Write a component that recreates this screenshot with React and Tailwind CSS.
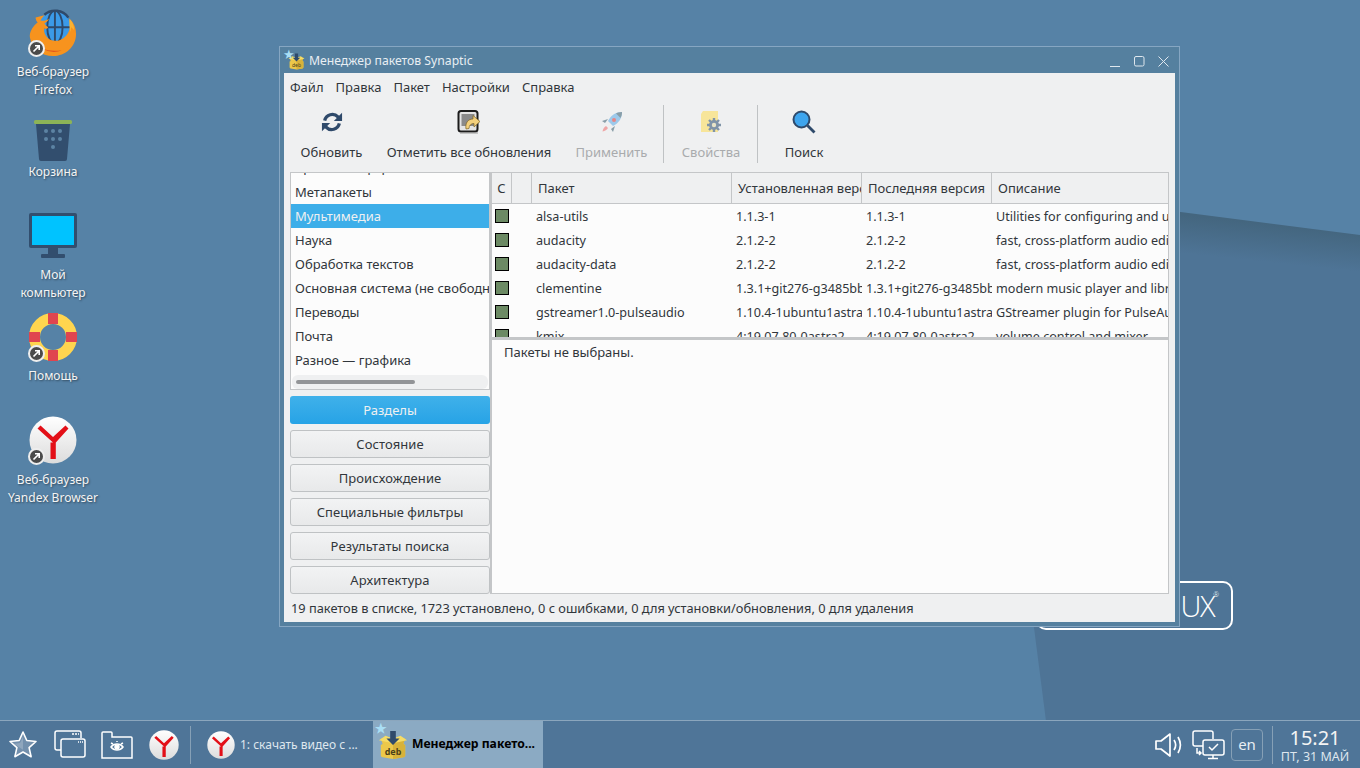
import React from 'react';

const font = { fontFamily: '"Noto Sans", sans-serif' };

const Shortcut = () => (
  <div className="absolute left-[-1px] bottom-[-1px] w-[17px] h-[17px] rounded-full bg-[#4a4a4a] border-2 border-[#eeeeee] flex items-center justify-center">
    <svg width="9" height="9" viewBox="0 0 9 9" fill="none" stroke="#fff" strokeWidth="1.6">
      <path d="M1.5 7.5L7 2M3 1.8h4.2V6" />
    </svg>
  </div>
);

const YandexIcon = ({ size = 48 }) => (
  <svg width={size} height={size} viewBox="0 0 48 48">
    <defs>
      <linearGradient id="yg" x1="0" y1="0" x2="0" y2="1">
        <stop offset="0" stopColor="#ffffff" />
        <stop offset="1" stopColor="#dcdcdc" />
      </linearGradient>
    </defs>
    <circle cx="24" cy="24" r="23.5" fill="url(#yg)" />
    <path d="M24 26.5L8.5 12.5l3-3L24 21 36.500 9.500l3 3L26.800 26.500V43h-5.300V26.500z" fill="#e30f17" />
  </svg>
);

const FirefoxIcon = () => (
  <svg width="50" height="50" viewBox="0 0 50 50">
    <path d="M7 10c0 2 1 4 2 5C4 19 0 25 1 31c2 11 12 19 24 19 13 0 24-10 24-23 0-6-2-11-6-15l-2 3c-1-5-4-9-8-12z" fill="#f7931e" />
    <circle cx="27" cy="20" r="16.500" fill="#3b9ae8" />
    <g fill="none" stroke="#2f4a6b" strokeWidth="2">
      <path d="M16 7a17 17 0 0 1 25 3" strokeWidth="2.600" />
      <path d="M27 3v34M10 20h34" />
      <ellipse cx="27" cy="20" rx="8" ry="17" />
    </g>
    <path d="M7 10c2 3 5 4 10 3 1 0 3-1 4-2-1 3-3 4-5 5 1 2 2 3 4 4-1 2-3 2-4 1-1 4 1 9 6 12 7 3 14 0 18-6 2-3 3-6 3-10l3 5c1 12-9 26-23 26C11 48 2 39 2 29 2 22 6 17 10 15c-2-1-3-3-3-5z" fill="#f7931e" />
    <path d="M42 11c3 3 5 7 5 12l-3-3-1 5c-1-4-1-10-1-14z" fill="#f9b233" />
    <path d="M14 42c5 4 14 5 20 2-6 1-14 1-20-2z" fill="#e2571e" />
  </svg>
);

const TrashIcon = () => (
  <svg width="40" height="42" viewBox="0 0 40 42">
    <rect x="1" y="0" width="38" height="4" rx="1.500" fill="#8cb357" />
    <path d="M3 4h34l-3 35a2 2 0 0 1-2 2H8a2 2 0 0 1-2-2z" fill="#324e6e" />
    <g fill="#5d83a3">
      <circle cx="13" cy="11" r="2" /><circle cx="20" cy="11" r="2" /><circle cx="27" cy="11" r="2" />
      <circle cx="13" cy="19" r="2" /><circle cx="20" cy="19" r="2" /><circle cx="27" cy="19" r="2" />
      <circle cx="20" cy="27" r="2" />
    </g>
  </svg>
);

const MonitorIcon = () => (
  <svg width="48" height="48" viewBox="0 0 48 48">
    <rect x="0" y="1" width="48" height="35" rx="2" fill="#324e6e" />
    <rect x="3" y="4" width="42" height="29" fill="#00c3ff" />
    <rect x="19" y="36" width="10" height="7" fill="#324e6e" />
    <rect x="12" y="42" width="24" height="4" rx="1" fill="#324e6e" />
  </svg>
);

const HelpIcon = () => (
  <svg width="48" height="48" viewBox="0 0 48 48">
    <circle cx="24" cy="24" r="18.500" fill="none" stroke="#ffd54f" strokeWidth="11" />
    <g fill="#e0454f">
      <rect x="19" y="0" width="10" height="11" />
      <rect x="19" y="37" width="10" height="11" />
      <rect x="0" y="19" width="11" height="10" />
      <rect x="37" y="19" width="11" height="10" />
    </g>
  </svg>
);

const DebIcon = ({ size = 32 }) => (
  <svg width={size} height={size} viewBox="0 0 32 32">
    <path d="M3 9l13 3 13-3-2 6 2 1v11a2 2 0 0 1-2 2l-11 2-11-2a2 2 0 0 1-2-2V16l2-1z" fill="#ecc84a" />
    <path d="M16 12v19l11-2a2 2 0 0 0 2-2V16l-2-1 2-6z" fill="#d8b23a" />
    <path d="M1 11l7-5 8 3 8-3 7 5-15 3z" fill="#f6dc66" />
    <path d="M13 1h6v8h4l-7 7-7-7h4z" fill="#2f4a6b" />
    <text x="16" y="27" textAnchor="middle" fontSize="9.500" fill="#4a3f1a" fontFamily="Noto Sans">deb</text>
  </svg>
);

const DesktopItem = ({ className, lines, children, shortcut, labelClass = 'mt-[6px]' }) => (
  <div className={`absolute flex flex-col items-center w-[110px] text-[12px] leading-[18px] text-[#f4f4f4] [text-shadow:1px_1px_2px_rgba(0,0,0,0.45)] ${className}`}>
    <div className="relative w-[48px] h-[48px] flex items-center justify-center">
      {children}
      {shortcut && <Shortcut />}
    </div>
    <div className={`text-center whitespace-nowrap ${labelClass}`}>
      {lines.map((l) => <div key={l}>{l}</div>)}
    </div>
  </div>
);

const ToolButton = ({ label, disabled, children, className = '' }) => (
  <div className={`flex flex-col items-center h-[62px] ${disabled ? 'text-[#a9abad]' : 'text-[#31363b]'} ${className}`}>
    <div className="h-[30px] w-[26px] mt-[1px] flex items-center justify-center">{children}</div>
    <div className="mt-[6px] leading-[18px] whitespace-nowrap">{label}</div>
  </div>
);

const ToolSep = () => <div className="w-px h-[58px] bg-[#bfc2c4] mt-[-1px]" />;

const packages = [
  ['alsa-utils', '1.1.3-1', '1.1.3-1', 'Utilities for configuring and using ALSA'],
  ['audacity', '2.1.2-2', '2.1.2-2', 'fast, cross-platform audio editor'],
  ['audacity-data', '2.1.2-2', '2.1.2-2', 'fast, cross-platform audio editor (data)'],
  ['clementine', '1.3.1+git276-g3485bbe', '1.3.1+git276-g3485bbe', 'modern music player and library organizer'],
  ['gstreamer1.0-pulseaudio', '1.10.4-1ubuntu1astra', '1.10.4-1ubuntu1astra', 'GStreamer plugin for PulseAudio'],
  ['kmix', '4:19.07.80-0astra2', '4:19.07.80-0astra2', 'volume control and mixer'],
];

const sections = ['Метапакеты', 'Мультимедиа', 'Наука', 'Обработка текстов', 'Основная система (не свободные)', 'Переводы', 'Почта', 'Разное — графика'];
const filters = ['Состояние', 'Происхождение', 'Специальные фильтры', 'Результаты поиска', 'Архитектура'];

const HeaderCell = ({ w, children, center }) => (
  <div className={`${w} h-full pt-[2px] shrink-0 overflow-hidden whitespace-nowrap border-r border-[#c4c6c8] flex items-center ${center ? 'justify-center' : 'pl-[6px]'}`}>
    {children}
  </div>
);

const Cell = ({ w, children }) => (
  <div className={`${w} pl-[4px] shrink-0 overflow-hidden whitespace-nowrap`}>{children}</div>
);

const SynapticWindow = () => (
  <div className="absolute left-[279px] top-[46px] w-[901px] h-[581px] border border-[#86a6c2] bg-[#55809f] flex flex-col px-[4px] pb-[4px] text-[13px] text-[#31363b]">
    {/* title bar */}
    <div className="h-[26px] pt-[2px] shrink-0 flex items-center relative text-[#e8eef3] text-[12.200px]">
      <span className="absolute left-[-1px] top-[1px] text-[#a9def5] text-[13px] leading-none">★</span>
      <div className="ml-[4px] mr-[4px]"><DebIcon size={17} /></div>
      <span>Менеджер пакетов Synaptic</span>
      <div className="ml-auto flex items-center gap-[13px] mr-[6px]">
        <svg width="11" height="11" viewBox="0 0 11 11" stroke="#dfe7ee" fill="none"><path d="M0 10.500h10" /></svg>
        <svg width="11" height="11" viewBox="0 0 11 11" stroke="#dfe7ee" fill="none"><rect x="0.500" y="0.500" width="9.500" height="9.500" rx="1.500" /></svg>
        <svg width="11" height="11" viewBox="0 0 11 11" stroke="#dfe7ee" fill="none"><path d="M0.500 0.500l10 10M10.500 0.500l-10 10" /></svg>
      </div>
    </div>
    <div className="flex-1 bg-[#eff0f1] flex flex-col min-h-0">
      {/* menu */}
      <div className="h-[28px] shrink-0 flex items-center gap-[12px] pl-[6px] pt-[1px]">
        {['Файл', 'Правка', 'Пакет', 'Настройки', 'Справка'].map((m) => <span key={m}>{m}</span>)}
      </div>
      {/* toolbar */}
      <div className="h-[71px] shrink-0 flex items-start pt-[5px] pl-[16px]">
        <ToolButton label="Обновить" className="w-[63px]">
          <svg width="22" height="22" viewBox="0 0 24 24" fill="none" stroke="#2f4a6b" strokeWidth="3.600">
            <path d="M4 10.500A8.500 8.500 0 0 1 18.500 6.500L21 9" />
            <path d="M20 13.500A8.500 8.500 0 0 1 5.500 17.500L3 15" />
            <path d="M23 2v9h-9z" fill="#2f4a6b" stroke="none" />
            <path d="M1 22v-9h9z" fill="#2f4a6b" stroke="none" />
          </svg>
        </ToolButton>
        <ToolButton label="Отметить все обновления" className="w-[164px] ml-[24px]">
          <svg width="24" height="24" viewBox="0 0 24 24">
            <rect x="1.500" y="1" width="19" height="20.500" rx="2.500" fill="#e4e4e4" stroke="#1c1c1c" strokeWidth="2" />
            <rect x="4.500" y="4" width="13" height="12" fill="#8a8a8a" />
            <path d="M9 19c-1-6 2-10 7-10V5.500l7 6-6 5.500v-3.500c-3 0-5 2-5 5z" fill="#f3d07c" stroke="#7d6220" strokeWidth="0.700" />
            <path d="M3 23h18" stroke="#999" />
          </svg>
        </ToolButton>
        <ToolButton label="Применить" disabled className="w-[73px] ml-[24px]">
          <svg width="24" height="24" viewBox="0 0 24 24" opacity="0.85">
            <path d="M22 2c-6 0-11 3-14 9l5 5c6-3 9-8 9-14z" fill="#8fc3ea" />
            <path d="M22 2c-3 0-5 .8-6 1.500l4.500 4.500C21.300 6.500 22 5 22 2z" fill="#78909c" />
            <circle cx="14" cy="10" r="2" fill="#e57373" />
            <path d="M8 9l-6 2 3 2zM15 16l-2 6-2-3z" fill="#78909c" />
            <path d="M6 16c-2 1-3 3-3.500 5.500C5 21 7 20 8 18z" fill="#ef9a9a" />
          </svg>
        </ToolButton>
        <div className="ml-[15px]"><ToolSep /></div>
        <ToolButton label="Свойства" disabled className="w-[58px] ml-[18px]">
          <svg width="22" height="24" viewBox="0 0 22 24">
            <path d="M3 1h15v21H1V4z" fill="#f7e59a" />
            <path d="M14 8v14M7 15h14M9 10l10 10M19 10L9 20" stroke="#8094a8" strokeWidth="2.400" />
            <circle cx="14" cy="15" r="5" fill="#8094a8" />
            <circle cx="14" cy="15" r="2.200" fill="#e8e4c8" />
          </svg>
        </ToolButton>
        <div className="ml-[17px]"><ToolSep /></div>
        <ToolButton label="Поиск" className="w-[40px] ml-[26px]">
          <svg width="24" height="24" viewBox="0 0 24 24">
            <circle cx="9.500" cy="9.500" r="8" fill="#3ea5ee" stroke="#2f4a6b" strokeWidth="2" />
            <path d="M15.500 15.500l7 7" stroke="#2f4a6b" strokeWidth="2.800" />
          </svg>
        </ToolButton>
      </div>
      {/* body */}
      <div className="h-[422px] shrink-0 flex pl-[6px] pr-[6px]">
        <div className="w-[200px] shrink-0 flex flex-col">
          <div className="h-[218px] shrink-0 border border-[#c4c6c8] bg-[#fcfcfc] flex flex-col overflow-hidden">
            <div className="h-[7px] shrink-0 overflow-hidden relative">
              <div className="pl-[4px] leading-[18px] mt-[-15px] whitespace-nowrap">Кросс-платформенные</div>
            </div>
            {sections.map((s, i) => (
              <div key={s} className={`h-[24px] pt-[2px] shrink-0 pl-[4px] flex items-center whitespace-nowrap overflow-hidden ${i === 1 ? 'bg-[#3daee9] text-[#eff0f1]' : ''}`}>{s}</div>
            ))}
            <div className="mx-[1px] mt-[3px] h-[14px] rounded-[6px] bg-[#eff0f1] flex items-center px-[4px]">
              <div className="w-[119px] h-[4px] rounded-full bg-[#929497]" />
            </div>
          </div>
          <div className="mt-[6px] h-[28px] pt-[2px] shrink-0 rounded-[3px] bg-gradient-to-b from-[#3fb1ea] to-[#26a3e6] text-[#eff0f1] flex items-center justify-center">Разделы</div>
          {filters.map((f) => (
            <div key={f} className="mt-[6px] h-[28px] pt-[2px] shrink-0 rounded-[3px] border border-[#bfc2c4] bg-gradient-to-b from-[#f2f3f4] to-[#e8e9ea] flex items-center justify-center tracking-[0.08px]">{f}</div>
          ))}
        </div>
        <div className="w-[2px] shrink-0 bg-[#c4c6c8]" />
        <div className="flex-1 min-w-0 flex flex-col border-r border-b border-[#c4c6c8]">
          <div className="h-[165px] shrink-0 overflow-hidden bg-[#fcfcfc] flex flex-col">
            <div className="h-[32px] shrink-0 flex border-t border-b border-[#c4c6c8] bg-[#eff0f1]">
              <HeaderCell w="w-[20px]" center>С</HeaderCell>
              <HeaderCell w="w-[20px]" />
              <HeaderCell w="w-[200px]">Пакет</HeaderCell>
              <HeaderCell w="w-[130px]">Установленная версия</HeaderCell>
              <HeaderCell w="w-[130px]">Последняя версия</HeaderCell>
              <div className="flex-1 flex items-center pl-[6px] pt-[2px]">Описание</div>
            </div>
            {packages.map((p) => (
              <div key={p[0]} className="h-[24px] shrink-0 flex items-center text-[12.600px]">
                <div className="w-[40px] shrink-0 pl-[3px]">
                  <div className="w-[14px] h-[14px] border border-black bg-[#6c8a64]" />
                </div>
                <div className="flex pt-[2px]">
                  <Cell w="w-[200px]">{p[0]}</Cell>
                  <Cell w="w-[130px]">{p[1]}</Cell>
                  <Cell w="w-[130px]">{p[2]}</Cell>
                  <Cell w="w-[177px]">{p[3]}</Cell>
                </div>
              </div>
            ))}
          </div>
          <div className="h-[3px] shrink-0 bg-[#c4c6c8]" />
          <div className="flex-1 bg-[#fcfcfc] pl-[12px] pt-[3px] leading-[18px]">Пакеты не выбраны.</div>
        </div>
      </div>
      {/* status */}
      <div className="flex-1 pt-[2px] flex items-center pl-[7px] text-[12.800px]">19 пакетов в списке, 1723 установлено, 0 с ошибками, 0 для установки/обновления, 0 для удаления</div>
    </div>
  </div>
);

const Taskbar = () => (
  <div className="absolute left-0 right-0 bottom-0 h-[48px] bg-[#4f7598] border-t border-[#8ba6bd] flex items-center text-[#dfe7ee] text-[12px]">
    <div className="w-[44px] flex justify-center ml-[1px]">
      <svg width="30" height="30" viewBox="0 0 30 30" fill="none">
        <path d="M15 2l3.800 8.500 9.200 1-6.900 6.100 2 9.100L15 22l-8.100 4.700 2-9.100L2 11.500l9.200-1z" stroke="#fff" strokeWidth="1.600" strokeLinejoin="round" fill="#dfe5ea" fillOpacity="0.25" />
        <path d="M15 7l-3 6-6 .8 9 6z" fill="#fff" fillOpacity="0.2" />
      </svg>
    </div>
    <div className="w-[48px] flex justify-center ml-[1px]">
      <svg width="32" height="30" viewBox="0 0 32 30" fill="none" stroke="#fff" strokeWidth="1.500">
        <path d="M7 20H3a2 2 0 0 1-2-2V3a2 2 0 0 1 2-2h22a2 2 0 0 1 2 2v5" />
        <rect x="7" y="9" width="24" height="18" rx="2" />
        <path d="M18 4h2M21 4h2M24 4h1M24 12h1M26 12h1M28 12h1" />
      </svg>
    </div>
    <div className="w-[46px] flex justify-center">
      <svg width="32" height="30" viewBox="0 0 32 30" fill="none" stroke="#fff" strokeWidth="1.500">
        <path d="M1 28V3a1 1 0 0 1 1-1h8a1 1 0 0 1 1 1v4h19a1 1 0 0 1 1 1v20z" />
        <path d="M10 17c3-4 9-4 12 0-3 4-9 4-12 0z" />
        <circle cx="16" cy="17" r="2" fill="#fff" />
        <path d="M10 13l2 1M22 13l-2 1M16 11v1" />
      </svg>
    </div>
    <div className="w-[44px] flex justify-center ml-[2px]"><YandexIcon size={30} /></div>
    <div className="w-px h-[38px] bg-[#86a0b6] ml-[4px]" />
    <div className="h-full w-[167px] flex items-center pl-[16px]">
      <YandexIcon size={28} />
      <span className="ml-[5px] whitespace-nowrap">1: скачать видео с ...</span>
    </div>
    <div className="relative h-full w-[170px] ml-[15px] bg-[#8baac3] flex items-center pl-[5px] text-black font-bold text-[12.200px]">
      <span className="absolute left-[2px] top-[1px] text-[#a9def5] text-[13px] leading-none">★</span>
      <DebIcon size={30} />
      <span className="ml-[4px] whitespace-nowrap">Менеджер пакето...</span>
    </div>
    <div className="ml-auto flex items-center h-full">
      <svg width="28" height="28" viewBox="0 0 28 28" fill="none" stroke="#fff" strokeWidth="1.700">
        <path d="M1 10v8h5l9 7V3L6 10z" strokeLinejoin="round" />
        <path d="M19 9c2 3 2 7 0 10M23 6c3 5 3 11 0 16" />
      </svg>
      <svg className="ml-[9px]" width="33" height="30" viewBox="0 0 33 30" fill="none" stroke="#fff" strokeWidth="1.500">
        <path d="M11 16H3a2 2 0 0 1-2-2V3a2 2 0 0 1 2-2h16a2 2 0 0 1 2 2v6" />
        <rect x="11" y="10" width="21" height="15" rx="2" />
        <path d="M21 25v3M16 28.500h10M17 17l3 3 6-6M5 18v5h4M7 21l2 2-2 2" />
      </svg>
      <div className="ml-[6px] w-[32px] h-[32px] rounded-[4px] border border-[#86a0b6] flex items-center justify-center text-[15px] text-[#e8eef3]">en</div>
      <div className="w-px h-[38px] bg-[#86a0b6] ml-[9px]" />
      <div className="w-[87px] pr-[3px] flex flex-col items-center">
        <div className="text-[20px] leading-[24px] text-[#f4f4f4]">15:21</div>
        <div className="text-[12.500px] leading-[14px] text-[#dfe7ee] whitespace-nowrap">ПТ, 31 МАЙ</div>
      </div>
    </div>
  </div>
);

export default function App() {
  return (
    <div className="relative w-[1360px] h-[768px] overflow-hidden bg-[#5682a6]" style={font}>
      {/* wallpaper */}
      <svg className="absolute inset-0" width="1360" height="768" viewBox="0 0 1360 768">
        <defs>
          <linearGradient id="facet" gradientUnits="userSpaceOnUse" x1="1270" y1="224" x2="1266" y2="262">
            <stop offset="0" stopColor="#44667f" />
            <stop offset="1" stopColor="#4e7496" />
          </linearGradient>
        </defs>
        <rect width="1360" height="768" fill="#5682a6" />
        <polygon points="1033,193 1360,235 1360,768 1052,768 1033,620" fill="url(#facet)" />
      </svg>
      {/* astra logo frame behind the window */}
      <div className="absolute left-[1036px] top-[581px] w-[197px] h-[49px] rounded-[10px] border-2 border-white flex items-center justify-end pr-[17px] text-white text-[29px] font-light" style={{ fontFamily: '"Open Sans", sans-serif' }}>
        <span className="relative tracking-[-1.500px]">UX<span className="absolute right-[-5px] top-[6px] text-[7px] tracking-normal">®</span></span>
      </div>

      <DesktopItem className="left-[-2px] top-[8px]" lines={['Веб-браузер', 'Firefox']} labelClass="mt-[7px]" shortcut><FirefoxIcon /></DesktopItem>
      <DesktopItem className="left-[-2px] top-[117px]" lines={['Корзина']} labelClass="mt-[-2px]"><TrashIcon /></DesktopItem>
      <DesktopItem className="left-[-2px] top-[212px]" lines={['Мой', 'компьютер']}><MonitorIcon /></DesktopItem>
      <DesktopItem className="left-[-2px] top-[313px]" lines={['Помощь']} shortcut><HelpIcon /></DesktopItem>
      <DesktopItem className="left-[-2px] top-[416px]" lines={['Веб-браузер', 'Yandex Browser']} labelClass="mt-[7px]" shortcut><YandexIcon /></DesktopItem>

      <SynapticWindow />
      <Taskbar />
    </div>
  );
}
